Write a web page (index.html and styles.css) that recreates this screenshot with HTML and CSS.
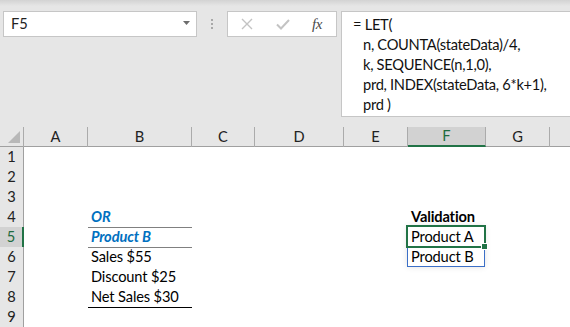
FILE: index.html
```html
<!DOCTYPE html>
<html>
<head>
<meta charset="utf-8">
<link rel="stylesheet" href="styles.css">
</head>
<body>
<div class="app">
  <div class="topbar">
    <div class="namebox">
      <span class="namebox-text">F5</span>
      <svg class="dd" width="7" height="4" viewBox="0 0 7 4"><polygon points="0,0 7,0 3.5,4" fill="#6d6d6d"/></svg>
    </div>
    <div class="grip"><i></i><i></i><i></i></div>
    <div class="fxbox">
      <svg class="ico-x" width="12" height="12" viewBox="0 0 12 12"><path d="M1 1 L11 11 M11 1 L1 11" stroke="#c3c3c3" stroke-width="1.4" fill="none"/></svg>
      <svg class="ico-ok" width="14" height="11" viewBox="0 0 14 11"><path d="M1 5.5 L5 9.5 L13 1" stroke="#c3c3c3" stroke-width="2" fill="none"/></svg>
      <span class="fx">fx</span>
    </div>
    <div class="formula">
      <div class="fl">= LET(</div>
      <div class="fl ind">n, COUNTA(stateData)/4,</div>
      <div class="fl ind">k, SEQUENCE(n,1,0),</div>
      <div class="fl ind">prd, INDEX(stateData, 6*k+1),</div>
      <div class="fl ind">prd )</div>
    </div>
  </div>

  <div class="sheet">
    <div class="row hdr">
      <div class="corner"><span class="tri"></span></div>
      <div class="ch">A</div><div class="ch">B</div><div class="ch">C</div><div class="ch">D</div>
      <div class="ch">E</div><div class="ch ch-sel">F</div><div class="ch">G</div><div class="ch last"></div>
    </div>
    <div class="row"><div class="rh">1</div><div></div><div></div><div></div><div></div><div></div><div></div><div></div><div></div></div>
    <div class="row"><div class="rh">2</div><div></div><div></div><div></div><div></div><div></div><div></div><div></div><div></div></div>
    <div class="row"><div class="rh">3</div><div></div><div></div><div></div><div></div><div></div><div></div><div></div><div></div></div>
    <div class="row"><div class="rh">4</div><div></div><div class="cell blue b-gray">OR</div><div></div><div></div><div></div><div class="cell bold">Validation</div><div></div><div></div></div>
    <div class="row"><div class="rh rh-sel">5</div><div></div><div class="cell blue b-gray">Product B</div><div></div><div></div><div></div><div class="cell active">Product A<span class="range"></span><span class="selbox"><span class="handle"></span></span></div><div></div><div></div></div>
    <div class="row"><div class="rh">6</div><div></div><div class="cell">Sales $55</div><div></div><div></div><div></div><div class="cell">Product B</div><div></div><div></div></div>
    <div class="row"><div class="rh">7</div><div></div><div class="cell">Discount $25</div><div></div><div></div><div></div><div></div><div></div><div></div></div>
    <div class="row"><div class="rh">8</div><div></div><div class="cell b-black">Net Sales $30</div><div></div><div></div><div></div><div></div><div></div><div></div></div>
    <div class="row"><div class="rh">9</div><div></div><div></div><div></div><div></div><div></div><div></div><div></div><div></div></div>
  </div>
</div>
</body>
</html>
```

FILE: styles.css
```css
* { box-sizing: border-box; }
html, body { margin: 0; padding: 0; }
body {
  width: 570px;
  height: 327px;
  overflow: hidden;
  background: #fff;
  font-family: Lato, "Noto Sans", sans-serif;
  font-size: 14.67px;
  color: #000;
}
.app { width: 570px; height: 327px; display: flex; flex-direction: column; }

/* top formula bar */
.topbar {
  height: 127px;
  flex: none;
  background: linear-gradient(#d3d3d3 0px, #e6e6e6 6px, #e6e6e6 100%);
  display: flex;
  align-items: flex-start;
  padding-top: 11px;
  padding-left: 3px;
  overflow: hidden;
}
.namebox {
  width: 194px;
  height: 26px;
  background: #fff;
  border: 1px solid #c6c6c6;
  display: flex;
  align-items: center;
  justify-content: space-between;
  padding: 0 6px 0 7px;
  flex: none;
}
.namebox-text { color: #222; line-height: 1; }
.dd { margin-top: -2px; }
.grip {
  width: 30px;
  height: 26px;
  display: flex;
  flex-direction: column;
  align-items: center;
  justify-content: center;
  gap: 2px;
  flex: none;
}
.grip i { display: block; width: 2px; height: 2px; background: #a8a8a8; }
.fxbox {
  width: 110px;
  height: 26px;
  background: #fff;
  border: 1px solid #c6c6c6;
  display: flex;
  align-items: center;
  padding-left: 13px;
  flex: none;
}
.ico-x { margin-right: 23px; }
.ico-ok { margin-right: 22px; margin-top: 1px; }
.fx {
  font-family: "Liberation Serif", serif;
  font-style: italic;
  font-size: 15px;
  color: #4a4a4a;
  letter-spacing: -0.5px;
}
.formula {
  margin-left: 4px;
  width: 260px;
  height: 106px;
  background: #fff;
  border: 1px solid #c6c6c6;
  border-right: none;
  padding: 3px 0 0 11px;
  flex: none;
}
.fl { height: 20px; line-height: 20px; color: #111; white-space: nowrap; letter-spacing: -0.3px; }
.fl.ind { padding-left: 10px; }

/* sheet */
.sheet { flex: 1; display: flex; flex-direction: column; }
.row {
  display: grid;
  grid-template-columns: 24px 64px 104px 63px 89px 64px 78px 64px 1fr;
  height: 20px;
}
.hdr { background: #e6e6e6; border-bottom: 1px solid #a0a0a0; }
.corner { position: relative; border-right: 1px solid #ababab; }
.tri {
  position: absolute;
  left: 8px;
  top: 4px;
  width: 0; height: 0;
  border-left: 12px solid transparent;
  border-bottom: 12px solid #b8b8b8;
}
.ch {
  border-right: 1px solid #ababab;
  text-align: center;
  line-height: 19px;
  color: #222;
}
.ch.last { border-right: none; }
.ch-sel {
  background: #d2d2d2;
  color: #1e6b3f;
  border-bottom: 2px solid #217346;
  line-height: 18px;
}
.rh {
  background: #e6e6e6;
  border-right: 1px solid #a0a0a0;
  border-bottom: 1px solid #c4c4c4;
  text-align: center;
  line-height: 20px;
  color: #222;
}
.rh-sel {
  background: #d2d2d2;
  color: #1e6b3f;
  border-right: 2px solid #217346;
}
.cell {
  padding: 0 3px;
  line-height: 19px;
  white-space: nowrap;
  position: relative;
  letter-spacing: -0.15px;
}
.blue { color: #0070c0; font-weight: bold; font-style: italic; }
.bold { font-weight: bold; }
.b-gray { border-bottom: 1px solid #808080; }
.b-black { border-bottom: 1px solid #000; }

.active { z-index: 2; }
.range {
  position: absolute;
  left: -1px;
  top: -1px;
  width: 78px;
  height: 41px;
  border: 1px solid #3b6fc7;
  box-shadow: 0 0 6px rgba(0,0,0,0.12);
  pointer-events: none;
}
.selbox {
  position: absolute;
  left: -2px;
  top: -2px;
  width: 80px;
  height: 23px;
  border: 2px solid #217346;
}
.handle {
  position: absolute;
  right: -4px;
  bottom: -4px;
  width: 7px;
  height: 7px;
  background: #217346;
  border: 1px solid #fff;
}
```
